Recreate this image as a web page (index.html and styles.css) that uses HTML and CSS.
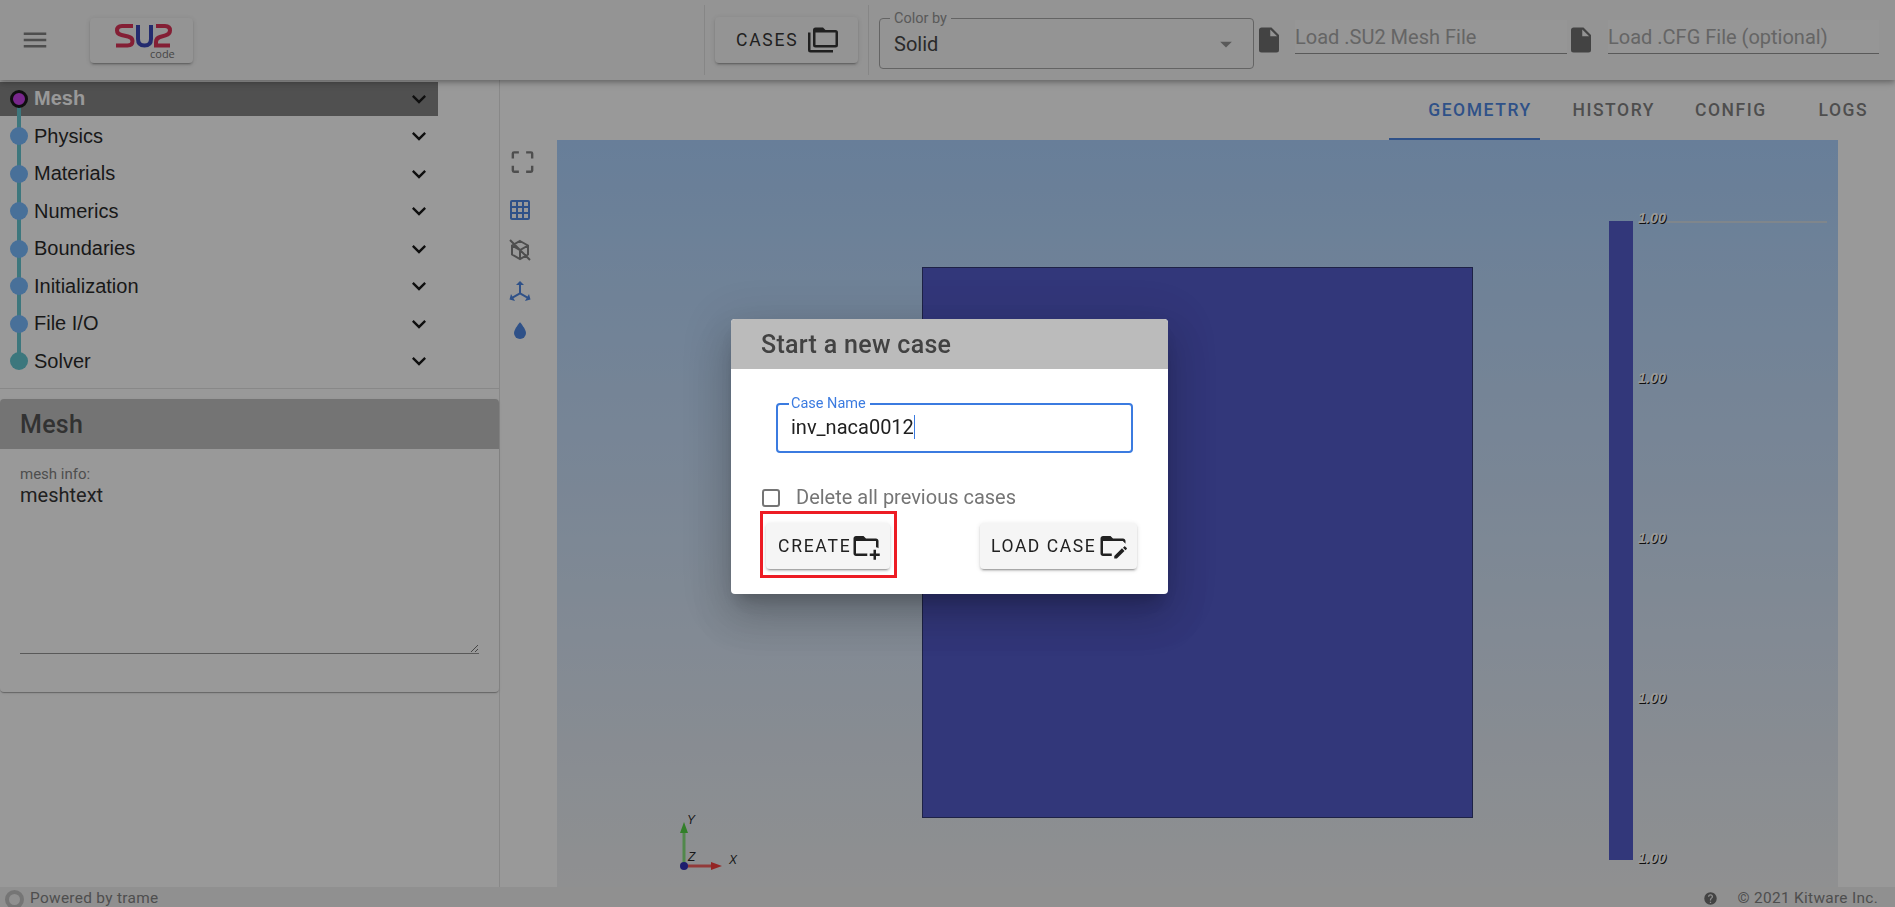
FILE: index.html
```html
<!DOCTYPE html>
<html>
<head>
    <title>SU2 GUI</title>
    <link rel="stylesheet" href="styles.css">
</head>
<body>
    <div class="app">
        <!-- Top toolbar -->
        <header class="toolbar">
            <svg class="icon-menu" viewBox="0 0 24 24"><path d="M3,6H21V8H3V6M3,11H21V13H3V11M3,16H21V18H3V16Z"/></svg>
            <div class="logo-button">
                <svg viewBox="0 0 103 45" width="103" height="45">
                    <path class="logo-red" d="M43 8H32Q27 8 27 12.5Q27 16 31.5 17L38 18.5Q42.5 19.5 42.5 23Q42.5 27.5 37.5 27.5H26"/>
                    <path class="logo-blue" d="M48 7V21Q48 27.5 54.5 27.5Q61 27.5 61 21V7"/>
                    <path class="logo-red" d="M66 8H75Q80 8 80 12.5Q80 16 75.5 17.3L70 19Q66 20.3 66 24V27.5H80"/>
                    <text class="logo-code" x="60" y="40">code</text>
                </svg>
            </div>
            <div class="divider divider-first"></div>
            <button class="btn btn-cases">
                CASES
                <svg class="icon-30" viewBox="0 0 24 24"><path d="M22,4A2,2 0 0,1 24,6V16A2,2 0 0,1 22,18H6A2,2 0 0,1 4,16V4A2,2 0 0,1 6,2H12L14,4H22M2,6V20H20V22H2A2,2 0 0,1 0,20V11H0V6H2M6,6V16H22V6H6Z"/></svg>
            </button>
            <div class="divider"></div>
            <fieldset class="select-box">
                <legend>Color by</legend>
                <span>Solid</span>
                <svg class="icon-caret" viewBox="0 0 24 24"><path d="M7,10L12,15L17,10H7Z"/></svg>
            </fieldset>
            <svg class="icon-30 icon-file" viewBox="0 0 24 24"><path d="M13,9V3.5L18.5,9M6,2C4.89,2 4,2.89 4,4V20A2,2 0 0,0 6,22H18A2,2 0 0,0 20,20V8L14,2H6Z"/></svg>
            <input class="file-input file-input-mesh" type="text" placeholder="Load .SU2 Mesh File">
            <svg class="icon-30 icon-file icon-file-cfg" viewBox="0 0 24 24"><path d="M13,9V3.5L18.5,9M6,2C4.89,2 4,2.89 4,4V20A2,2 0 0,0 6,22H18A2,2 0 0,0 20,20V8L14,2H6Z"/></svg>
            <input class="file-input file-input-cfg" type="text" placeholder="Load .CFG File (optional)">
        </header>

        <div class="workspace">
            <!-- Left navigation with steps -->
            <nav class="side-panel">
                <div class="stepper">
                    <div class="step step-active">
                        <div class="step-body"><span class="dot"></span><span class="step-name">Mesh</span><svg class="chevron" viewBox="0 0 24 24"><path d="M7.41,8.58L12,13.17L16.59,8.58L18,10L12,16L6,10L7.41,8.58Z"/></svg></div>
                    </div>
                    <div class="step">
                        <div class="step-body"><span class="dot"></span><span class="step-name">Physics</span><svg class="chevron" viewBox="0 0 24 24"><path d="M7.41,8.58L12,13.17L16.59,8.58L18,10L12,16L6,10L7.41,8.58Z"/></svg></div>
                    </div>
                    <div class="step">
                        <div class="step-body"><span class="dot"></span><span class="step-name">Materials</span><svg class="chevron" viewBox="0 0 24 24"><path d="M7.41,8.58L12,13.17L16.59,8.58L18,10L12,16L6,10L7.41,8.58Z"/></svg></div>
                    </div>
                    <div class="step">
                        <div class="step-body"><span class="dot"></span><span class="step-name">Numerics</span><svg class="chevron" viewBox="0 0 24 24"><path d="M7.41,8.58L12,13.17L16.59,8.58L18,10L12,16L6,10L7.41,8.58Z"/></svg></div>
                    </div>
                    <div class="step">
                        <div class="step-body"><span class="dot"></span><span class="step-name">Boundaries</span><svg class="chevron" viewBox="0 0 24 24"><path d="M7.41,8.58L12,13.17L16.59,8.58L18,10L12,16L6,10L7.41,8.58Z"/></svg></div>
                    </div>
                    <div class="step">
                        <div class="step-body"><span class="dot"></span><span class="step-name">Initialization</span><svg class="chevron" viewBox="0 0 24 24"><path d="M7.41,8.58L12,13.17L16.59,8.58L18,10L12,16L6,10L7.41,8.58Z"/></svg></div>
                    </div>
                    <div class="step">
                        <div class="step-body"><span class="dot"></span><span class="step-name">File I/O</span><svg class="chevron" viewBox="0 0 24 24"><path d="M7.41,8.58L12,13.17L16.59,8.58L18,10L12,16L6,10L7.41,8.58Z"/></svg></div>
                    </div>
                    <div class="step step-last">
                        <div class="step-body"><span class="dot"></span><span class="step-name">Solver</span><svg class="chevron" viewBox="0 0 24 24"><path d="M7.41,8.58L12,13.17L16.59,8.58L18,10L12,16L6,10L7.41,8.58Z"/></svg></div>
                    </div>
                </div>
                <div class="panel-divider"></div>

                <!-- Card for the selected step -->
                <section class="card">
                    <h2 class="card-title">Mesh</h2>
                    <div class="card-body">
                        <label class="info-label">mesh info:</label>
                        <textarea class="info-text" readonly>meshtext</textarea>
                    </div>
                </section>
            </nav>

            <main class="main-area">
                <div class="tabs">
                    <div class="tab tab-geometry">GEOMETRY</div>
                    <div class="tab tab-history">HISTORY</div>
                    <div class="tab tab-config">CONFIG</div>
                    <div class="tab tab-logs">LOGS</div>
                </div>
                <div class="view-row">
                    <div class="view-tools">
                        <svg class="tool tool-fit" viewBox="0 0 24 24"><path d="M5,5H9V3H5A2,2 0 0,0 3,5V9H5V5M19,3H15V5H19V9H21V5A2,2 0 0,0 19,3M19,19H15V21H19A2,2 0 0,0 21,19V15H19V19M5,15H3V19A2,2 0 0,0 5,21H9V19H5V15Z"/></svg>
                        <svg class="tool tool-on tool-grid" viewBox="0 0 24 24"><path d="M10,4V8H14V4H10M16,4V8H20V4H16M16,10V14H20V10H16M16,16V20H20V16H16M14,20V16H10V20H14M8,20V16H4V20H8M8,14V10H4V14H8M8,8V4H4V8H8M10,14H14V10H10V14M4,2H20A2,2 0 0,1 22,4V20A2,2 0 0,1 20,22H4C2.92,22 2,21.1 2,20V4A2,2 0 0,1 4,2Z"/></svg>
                        <svg class="tool tool-cube" viewBox="0 0 24 24"><path d="M12 3L20 7.5V16.5L12 21L4 16.5V7.5ZM4 7.5L12 12L20 7.5M12 12V21M2 2L22 22"/></svg>
                        <svg class="tool tool-on tool-axis" viewBox="0 0 24 24"><path d="M12,2L16,6H13V13.85L19.53,17.61L21,15.03L22.5,20.5L17,21.96L18.53,19.35L12,15.58L5.47,19.35L7,21.96L1.5,20.5L3,15.03L4.47,17.61L11,13.85V6H8L12,2Z"/></svg>
                        <svg class="tool tool-on tool-drop" viewBox="0 0 24 24"><path d="M12,20A6,6 0 0,1 6,14C6,10 12,3.25 12,3.25C12,3.25 18,10 18,14A6,6 0 0,1 12,20Z"/></svg>
                    </div>

                    <!-- 3D render canvas -->
                    <div class="viewport">
                        <div class="mesh-square"></div>
                        <div class="bar-line"></div>
                        <div class="color-bar"></div>
                        <div class="bar-ticks">
                            <span>1.00</span>
                            <span>1.00</span>
                            <span>1.00</span>
                            <span>1.00</span>
                            <span>1.00</span>
                        </div>
                        <svg class="axes" viewBox="0 -8 64 68" width="64" height="68">
                            <path class="axis-y" d="M7 49V14"/>
                            <path class="axis-y-head" d="M7 5L11 16H3Z"/>
                            <path class="axis-x" d="M7 49H36"/>
                            <path class="axis-x-head" d="M45 49L34 53V45Z"/>
                            <circle class="axis-o" cx="7" cy="49" r="4"/>
                            <text class="axis-text" x="10" y="7">Y</text>
                            <text class="axis-text" x="11" y="44">Z</text>
                            <text class="axis-text" x="52" y="47">X</text>
                        </svg>
                    </div>
                </div>
            </main>
        </div>

        <footer class="footer">
            <span class="loader"></span>
            <span class="powered">Powered by trame</span>
            <svg class="icon-help" viewBox="0 0 24 24"><path d="M15.07,11.25L14.17,12.17C13.45,12.89 13,13.5 13,15H11V14.5C11,13.39 11.45,12.39 12.17,11.67L13.41,10.41C13.78,10.05 14,9.55 14,9C14,7.89 13.1,7 12,7A2,2 0 0,0 10,9H8A4,4 0 0,1 12,5A4,4 0 0,1 16,9C16,9.88 15.64,10.67 15.07,11.25M13,19H11V17H13M12,2A10,10 0 0,0 2,12A10,10 0 0,0 12,22A10,10 0 0,0 22,12C22,6.47 17.5,2 12,2Z"/></svg>
            <span class="copyright">© 2021 Kitware Inc.</span>
        </footer>
    </div>

    <!-- Modal dialog over a dimmed page -->
    <div class="scrim"></div>
    <div class="dialog">
        <div class="dialog-title">Start a new case</div>
        <fieldset class="name-field">
            <legend>Case Name</legend>
            <span class="name-value">inv_naca0012</span>
        </fieldset>
        <div class="check-row">
            <span class="check-box"></span>
            <span class="check-label">Delete all previous cases</span>
        </div>
        <div class="dialog-actions">
            <div class="highlight">
                <button class="btn btn-create">
                    CREATE
                    <svg class="icon-30" viewBox="0 0 24 24"><path d="M13 19C13 19.34 13.04 19.67 13.09 20H4C2.9 20 2 19.11 2 18V6C2 4.89 2.89 4 4 4H10L12 6H20C21.1 6 22 6.89 22 8V13.81C21.39 13.46 20.72 13.22 20 13.09V8H4V18H13.09C13.04 18.33 13 18.66 13 19M20 18V15H18V18H15V20H18V23H20V20H23V18H20Z"/></svg>
                </button>
            </div>
            <button class="btn btn-load">
                LOAD CASE
                <svg class="icon-30" viewBox="0 0 24 24"><path d="M4 18H11V20H4C2.9 20 2 19.11 2 18V6C2 4.89 2.89 4 4 4H10L12 6H20C21.1 6 22 6.89 22 8V10.17L20.41 8.59L20 8.17V8H4V18M23 14.3L22 15.3L20 13.3L21 12.3C21.2 12.1 21.5 12.1 21.7 12.3L23 13.6C23.2 13.8 23.2 14.1 23 14.3M13 19.9V22H15.1L21.2 15.9L19.2 13.8L13 19.9Z"/></svg>
            </button>
        </div>
    </div>
</body>
</html>
```

FILE: styles.css
```css
/* Page base */
html, body {
    margin: 0;
    height: 100%;
    overflow: hidden;
}

body {
    background-color: #fff;
    font-family: Roboto, "Liberation Sans", sans-serif;
    color: #212121;
}

.app {
    display: flex;
    flex-direction: column;
    height: 100vh;
}

/* Toolbar */
.toolbar {
    position: relative;
    z-index: 5;
    display: flex;
    align-items: center;
    flex: 0 0 80px;
    box-sizing: border-box;
    padding-left: 20px;
    background-color: #f5f5f5;
    box-shadow: 0 2px 4px -1px rgba(0, 0, 0, 0.2), 0 4px 5px 0 rgba(0, 0, 0, 0.14), 0 1px 10px 0 rgba(0, 0, 0, 0.12);
}

.icon-menu {
    width: 30px;
    height: 30px;
    fill: #757575;
}

.logo-button {
    width: 103px;
    height: 45px;
    margin-left: 40px;
    border-radius: 4px;
    background-color: #f5f5f5;
    box-shadow: 0 3px 1px -2px rgba(0, 0, 0, 0.2), 0 2px 2px 0 rgba(0, 0, 0, 0.14), 0 1px 5px 0 rgba(0, 0, 0, 0.12);
}

.logo-red, .logo-blue {
    fill: none;
    stroke-width: 4;
}

.logo-red {
    stroke: #d81e46;
}

.logo-blue {
    stroke: #2535b0;
}

.logo-code {
    font-family: "Open Sans", sans-serif;
    font-size: 11px;
    fill: #666;
}

.divider {
    width: 1px;
    height: 70px;
    margin-left: 10px;
    background-color: #dcdcdc;
}

.divider-first {
    margin-left: 511px;
}

.btn {
    display: flex;
    align-items: center;
    box-sizing: border-box;
    height: 46px;
    border: none;
    border-radius: 4px;
    background-color: #f5f5f5;
    color: #212121;
    font-family: Roboto, sans-serif;
    font-size: 17.5px;
    font-weight: 400;
    letter-spacing: 0.1em;
    white-space: nowrap;
    box-shadow: 0 3px 1px -2px rgba(0, 0, 0, 0.2), 0 2px 2px 0 rgba(0, 0, 0, 0.14), 0 1px 5px 0 rgba(0, 0, 0, 0.12);
}

.icon-30 {
    width: 30px;
    height: 30px;
    flex: none;
    fill: #212121;
}

.btn-cases {
    justify-content: space-between;
    width: 143px;
    margin-left: 10px;
    padding: 0 20px 0 21px;
}

.select-box {
    position: relative;
    box-sizing: border-box;
    width: 375px;
    height: 57px;
    margin: 0 0 0 10px;
    padding: 6px 0 0 14px;
    border: 1px solid #9e9e9e;
    border-radius: 4px;
    font-size: 20px;
    color: #333;
}

.select-box legend {
    padding: 0 4px;
    margin-left: -4px;
    font-size: 14.5px;
    line-height: 14px;
    color: #8a8a8a;
}

.icon-caret {
    position: absolute;
    right: 13px;
    top: 4px;
    width: 28px;
    height: 28px;
    fill: #8a8a8a;
}

.icon-file {
    fill: #616161;
}

.file-input {
    box-sizing: border-box;
    height: 34px;
    margin-left: 11px;
    padding: 0;
    border: none;
    border-bottom: 1px solid #8a8a8a;
    background-color: #f9f9f9;
    font-family: Roboto, sans-serif;
    font-size: 20px;
    outline: none;
    transform: translateY(-3px);
}

.file-input::placeholder {
    color: #a0a0a0;
    opacity: 1;
}

.file-input-mesh {
    width: 272px;
}

.file-input-cfg {
    width: 271px;
    margin-left: 12px;
}

.icon-file-cfg {
    margin-left: -1px;
}

/* Body of the page below the toolbar */
.workspace {
    display: flex;
    flex: 1;
    min-height: 0;
}

.side-panel {
    box-sizing: border-box;
    width: 500px;
    border-right: 1px solid #e0e0e0;
}

/* Steps list */
.stepper {
    position: relative;
    margin-top: -0.2px;
}

.stepper::before {
    content: "";
    position: absolute;
    z-index: 1;
    left: 17px;
    top: 18px;
    height: 263px;
    width: 4px;
    background-color: #55c0cc;
}

.step {
    display: flex;
    align-items: center;
    width: 438px;
    height: 37.5px;
}

.step-body {
    display: flex;
    align-items: center;
    flex: 1;
    height: 34px;
    padding-left: 10px;
    padding-right: 5px;
    font-family: "Liberation Sans", Arial, sans-serif;
    font-size: 20px;
    color: #111;
}

.dot {
    position: relative;
    z-index: 2;
    box-sizing: border-box;
    flex: none;
    width: 18px;
    height: 18px;
    margin-right: 6px;
    border-radius: 50%;
    background-color: #69b4ff;
}

.step-name {
    flex: 1;
}

.chevron {
    flex: none;
    width: 28px;
    height: 28px;
    fill: #000;
}

.step-active .step-body {
    background-color: #787878;
    color: #fff;
    font-weight: bold;
}

.step-active .dot {
    background-color: #c22ee7;
    border: 3px solid #000;
}

.step-last .dot {
    background-color: #53c0cc;
}

.panel-divider {
    height: 1px;
    margin-top: 8.2px;
    background-color: #e0e0e0;
}

/* Card under the steps */
.card {
    height: 293px;
    margin-top: 10px;
    border-radius: 4px;
    background-color: #fff;
    box-shadow: 0 2px 1px -1px rgba(0, 0, 0, 0.2), 0 1px 1px 0 rgba(0, 0, 0, 0.14), 0 1px 3px 0 rgba(0, 0, 0, 0.12);
}

.card-title {
    height: 50px;
    margin: 0;
    padding-left: 20px;
    border-radius: 4px 4px 0 0;
    background-color: #bbb;
    color: #424242;
    font-size: 25px;
    font-weight: 500;
    letter-spacing: 0.3px;
    line-height: 52px;
}

.card-body {
    display: flex;
    flex-direction: column;
    padding: 18px 20px 0;
}

.info-label {
    font-size: 15px;
    line-height: 15px;
    color: #757575;
}

.info-text {
    box-sizing: border-box;
    height: 172px;
    margin: 0;
    padding: 0;
    border: none;
    border-bottom: 1px solid #8a8a8a;
    background: transparent;
    font-family: Roboto, sans-serif;
    font-size: 20px;
    line-height: 26px;
    color: #212121;
    outline: none;
}

/* Main area: tabs and render view */
.main-area {
    display: flex;
    flex-direction: column;
    flex: 1;
    min-width: 0;
}

.tabs {
    display: flex;
    justify-content: flex-end;
    flex: 0 0 60px;
    box-sizing: border-box;
    padding-right: 26.8px;
}

.tab {
    box-sizing: border-box;
    height: 60px;
    font-size: 17.5px;
    font-weight: 500;
    letter-spacing: 0.0892em;
    line-height: 60px;
    color: #757575;
}

.tab-geometry {
    padding: 0 8.4px 0 39.2px;
    border-bottom: 2px solid #3b7be0;
    color: #3b7be0;
}

.tab-history {
    padding-left: 32.2px;
}

.tab-config {
    padding-left: 39.8px;
}

.tab-logs {
    padding-left: 51.8px;
}

.view-row {
    display: flex;
    flex: 1;
    min-height: 0;
}

.view-tools {
    display: flex;
    flex-direction: column;
    align-items: center;
    flex: 0 0 40px;
    width: 40px;
    margin-right: 17px;
    padding-top: 2px;
}

.tool {
    flex: none;
    width: 24px;
    height: 40px;
    fill: #757575;
}

.tool-on {
    fill: #3b7be0;
}

.tool-fit {
    width: 29px;
    margin-left: 4px;
    margin-bottom: 8px;
}

.tool-cube {
    fill: none;
    stroke: #757575;
    stroke-width: 2;
}

.tool-axis {
    margin-top: 1px;
}

.viewport {
    position: relative;
    flex: 0 0 1281px;
    background: linear-gradient(#a4ceff, #edeef0);
    overflow: hidden;
}

.mesh-square {
    position: absolute;
    left: 365px;
    top: 127px;
    width: 551px;
    height: 551px;
    box-sizing: border-box;
    border: 1px solid #1c2466;
    background-color: #424ac6;
}

.bar-line {
    position: absolute;
    left: 1103px;
    top: 81px;
    width: 167px;
    height: 2px;
    background-color: #cfdce8;
}

.color-bar {
    position: absolute;
    left: 1052px;
    top: 81px;
    width: 24px;
    height: 639px;
    background-color: #424ac6;
}

.bar-ticks {
    position: absolute;
    left: 1081px;
    top: 70px;
    height: 656px;
    display: flex;
    flex-direction: column;
    justify-content: space-between;
    font-family: "Liberation Sans", Arial, sans-serif;
    font-size: 14.4px;
    font-weight: bold;
    font-style: italic;
    line-height: 16px;
    color: #fff;
    text-shadow: 1px 1px 0 #000;
}

.axes {
    position: absolute;
    left: 120px;
    top: 669px;
}

.axis-y {
    stroke: #7be070;
    stroke-width: 3;
}

.axis-y-head {
    fill: #42d030;
}

.axis-x {
    stroke: #f25050;
    stroke-width: 3;
}

.axis-x-head {
    fill: #f52a2a;
}

.axis-o {
    fill: #1c1cb0;
}

.axis-text {
    font-family: "Liberation Sans", Arial, sans-serif;
    font-size: 12px;
    font-style: italic;
    fill: #111;
}

/* Footer */
.footer {
    display: flex;
    align-items: center;
    flex: 0 0 20px;
    padding: 2px 17px 0 5px;
    box-sizing: border-box;
    background-color: #eee;
    font-size: 15.4px;
    color: #757575;
    letter-spacing: 0.02em;
    overflow: hidden;
}

.loader {
    box-sizing: border-box;
    flex: none;
    width: 19px;
    height: 19px;
    margin-top: 3px;
    margin-right: 6px;
    border: 4px solid #bdbdbd;
    border-radius: 50%;
}

.powered {
    flex: 1;
}

.icon-help {
    width: 15px;
    height: 15px;
    margin-right: 20px;
    fill: #616161;
}

/* Dimmed layer and dialog */
.scrim {
    position: fixed;
    inset: 0;
    z-index: 10;
    background-color: rgba(33, 33, 33, 0.46);
}

.dialog {
    position: fixed;
    z-index: 11;
    left: 731px;
    top: 319px;
    box-sizing: border-box;
    width: 437px;
    height: 275px;
    border-radius: 4px;
    background-color: #fff;
    overflow: hidden;
    box-shadow: 0 11px 15px -7px rgba(0, 0, 0, 0.2), 0 24px 38px 3px rgba(0, 0, 0, 0.14), 0 9px 46px 8px rgba(0, 0, 0, 0.12);
}

.dialog-title {
    height: 50px;
    padding-left: 30px;
    background-color: #bbb;
    color: #424242;
    font-size: 25px;
    font-weight: 500;
    letter-spacing: 0.3px;
    line-height: 52px;
}

.name-field {
    box-sizing: border-box;
    width: 357px;
    height: 57px;
    margin: 27px 0 0 45px;
    padding: 0 0 0 13px;
    border: 2px solid #3b7be0;
    border-radius: 4px;
}

.name-field legend {
    margin-left: -2px;
    padding: 0 4px 0 2px;
    font-size: 14.5px;
    line-height: 16px;
    color: #3b7be0;
}

.name-value {
    display: inline-block;
    height: 24px;
    border-right: 1px solid #3b7be0;
    font-size: 20px;
    line-height: 24px;
    margin-top: 3px;
}

.check-row {
    display: flex;
    align-items: center;
    height: 18px;
    margin: 36px 0 0 31px;
}

.check-box {
    box-sizing: border-box;
    width: 18px;
    height: 18px;
    margin-right: 16px;
    border: 2px solid #757575;
    border-radius: 3px;
}

.check-label {
    margin-top: -2px;
    font-size: 20px;
    line-height: 18px;
    color: #757575;
}

.dialog-actions {
    display: flex;
    align-items: flex-start;
    justify-content: space-between;
    margin: 4px 31px 0 29px;
}

.highlight {
    padding: 9px 4px 6px 3px;
    border: 3px solid #ed1c24;
}

.btn-create {
    width: 124px;
    padding: 0 9px 0 12px;
    justify-content: space-between;
}

.btn-load {
    width: 157px;
    margin-top: 12px;
    padding: 0 9px 0 11px;
    letter-spacing: 0.09em;
    justify-content: space-between;
}
```
